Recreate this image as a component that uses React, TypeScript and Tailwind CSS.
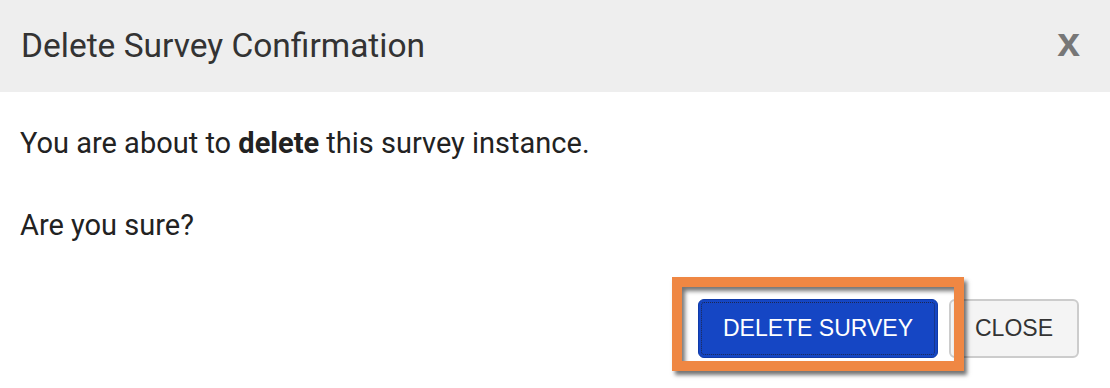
import React from "react";

const roboto = { fontFamily: "Roboto, 'Liberation Sans', sans-serif" };

export default function App() {
  return (
    <div className="h-[388px] w-[1110px] overflow-hidden bg-white">
      <div className="flex h-[92px] items-center justify-between bg-[#eeeeee] pl-[21px] pr-[30px]">
        <h2 className="text-[33.5px] font-normal leading-[40px] text-[#333333]" style={roboto}>
          Delete Survey Confirmation
        </h2>
        <button className="-mt-[8px] font-['Liberation_Sans',Arial,sans-serif] text-[41px] font-bold leading-none text-[#777777]">
          x
        </button>
      </div>
      <div className="px-[20px] pt-[34px] text-[29px] leading-[34px] text-[#222222]" style={roboto}>
        <p>
          You are about to <strong className="font-bold">delete</strong> this survey instance.
        </p>
        <p className="mt-[48px]">Are you sure?</p>
      </div>
      <div className="mt-[57px] flex justify-end gap-[11px] pr-[31px] font-['Liberation_Sans',Arial,sans-serif]">
        <div className="relative">
          <button className="flex h-[59px] w-[240px] items-center justify-center rounded-[6px] border border-[#0f3aa8] bg-[#1546c4] text-[23px] text-white outline-1 -outline-offset-[4px] outline-dotted outline-[#1c2750]">
            DELETE SURVEY
          </button>
          <div className="pointer-events-none absolute -top-[22px] -right-[26px] -bottom-[13px] -left-[26px] border-[10px] border-[#ef8743] shadow-[3px_4px_4px_rgba(0,0,0,0.55),inset_3px_4px_4px_rgba(0,0,0,0.55)]" />
        </div>
        <button className="flex h-[59px] w-[130px] items-center justify-center rounded-[6px] border-2 border-[#cccccc] bg-[#f4f4f4] text-[23px] text-[#333333]">
          CLOSE
        </button>
      </div>
    </div>
  );
}
